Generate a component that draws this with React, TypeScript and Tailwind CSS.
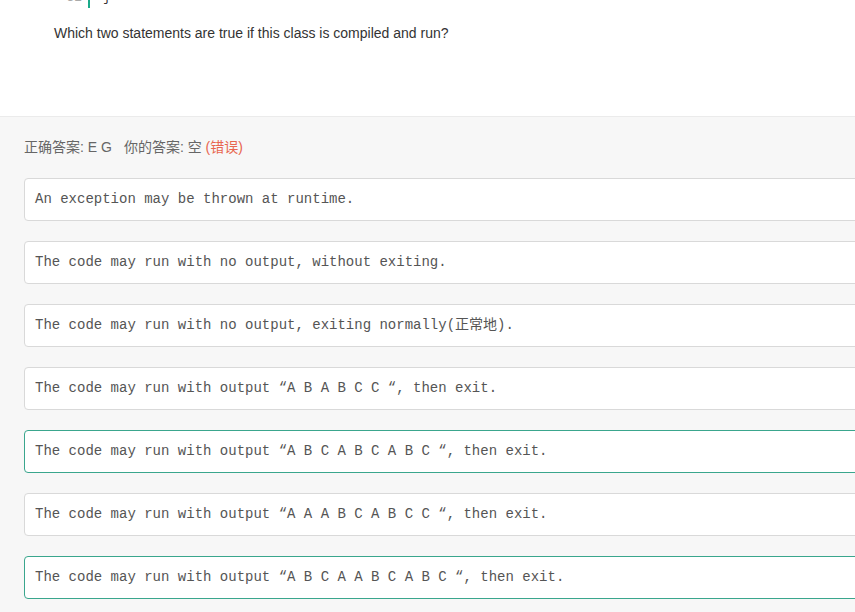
import React from "react";

const options = [
  { text: "An exception may be thrown at runtime.", ok: false },
  { text: "The code may run with no output, without exiting.", ok: false },
  { text: "The code may run with no output, exiting normally(正常地).", ok: false },
  { text: "The code may run with output “A B A B C C “, then exit.", ok: false },
  { text: "The code may run with output “A B C A B C A B C “, then exit.", ok: true },
  { text: "The code may run with output “A A A B C A B C C “, then exit.", ok: false },
  { text: "The code may run with output “A B C A A B C A B C “, then exit.", ok: true },
];

export default function App() {
  return (
    <div className="w-[855px] h-[612px] overflow-hidden bg-[#f7f7f7]" style={{ fontFamily: '"Liberation Sans", Arial, "Noto Sans CJK SC", sans-serif' }}>
      <div className="bg-white border-b border-[#ebebeb] h-[117px] flow-root">
        <div className="flex items-center h-[20px] -mt-[12px] pl-[60px]" style={{ fontFamily: '"Liberation Mono", "Courier New", monospace' }}>
          <span className="w-[22px] text-right text-[13px] text-[#aaa]">32</span>
          <span className="ml-[6px] w-[2px] h-[20px] bg-[#1aaa8a]" />
          <span className="ml-[13px] text-[13px] text-[#333]">{"}"}</span>
        </div>
        <p className="ml-[54px] mt-[15px] text-[14px] text-[#333]">Which two statements are true if this class is compiled and run?</p>
      </div>
      <div className="pl-[24px] pt-[20px]">
        <div className="text-[14px] text-[#666] leading-[20px]">
          正确答案: E G<span className="ml-[12px]">你的答案: 空</span>{" "}
          <span className="text-[#e8664f]">(错误)</span>
        </div>
        <div className="mt-[21px] flex flex-col gap-[20px]">
          {options.map((o, i) => (
            <div
              key={i}
              className={`w-[900px] h-[43px] rounded-[4px] bg-white border flex items-center pl-[10px] text-[14px] text-[#555] ${o.ok ? "border-[#3aa68d]" : "border-[#d9d9d9]"}`}
              style={{ fontFamily: '"Liberation Mono", "Courier New", "Noto Sans CJK SC", monospace' }}
            >
              {o.text}
            </div>
          ))}
        </div>
      </div>
    </div>
  );
}
